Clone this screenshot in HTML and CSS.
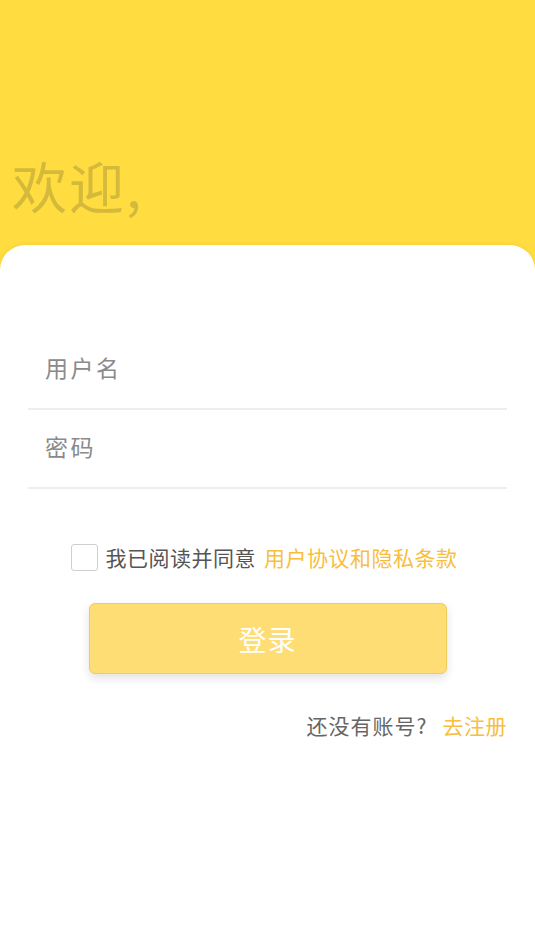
FILE: index.html
```html
<!DOCTYPE html>
<html lang="zh-CN">
<head>
    <meta charset="UTF-8">
    <meta name="viewport" content="width=device-width, initial-scale=1.0">
    <title>登录</title>
    <link rel="stylesheet" href="styles.css">
</head>
<body>
    <div class="header">
        <h1>欢迎,</h1>
    </div>

    <div class="card">
        <div class="form">
            <div class="field">
                <input type="text" placeholder="用户名">
            </div>
            <div class="field">
                <input type="password" placeholder="密码">
            </div>
        </div>

        <label class="agree">
            <span class="box"></span>
            <span>我已阅读并同意</span>
            <a href="#" class="link">用户协议和隐私条款</a>
        </label>

        <button class="login">登录</button>

        <div class="register">
            还没有账号?<a href="#" class="link">去注册</a>
        </div>
    </div>
</body>
</html>
```

FILE: styles.css
```css
body {
    font-family: "Noto Sans CJK SC", "Noto Sans", sans-serif;
    background-color: #fff;
    margin: 0;
    padding: 0;
}

.header {
    background-color: #ffdc3f;
    height: 270px;
    padding: 0 12px;
    box-sizing: border-box;
}

.header h1 {
    margin: 0;
    padding-top: 144px;
    font-size: 55px;
    font-weight: normal;
    line-height: 80px;
    letter-spacing: 2px;
    color: #d5b93a;
}

.card {
    background-color: #fff;
    margin-top: -25px;
    border-radius: 25px 25px 0 0;
    padding: 86px 28px 0;
    min-height: 600px;
    box-shadow: 0 -1px 3px rgba(180, 150, 30, 0.15);
}

.field {
    border-bottom: 2px solid #eeeeee;
    height: 77px;
    display: flex;
    align-items: center;
}

.field input {
    border: none;
    outline: none;
    width: 100%;
    padding: 0 16px 6px 17px;
    font-family: inherit;
    font-size: 23px;
    letter-spacing: 2.5px;
    color: #333;
    background: transparent;
}

.field input::placeholder {
    color: #8a8a8a;
}

.agree {
    display: flex;
    align-items: center;
    justify-content: center;
    margin-top: 53px;
    padding-right: 7px;
    font-size: 21px;
    letter-spacing: 0.5px;
    color: #555;
}

.box {
    width: 25px;
    height: 25px;
    border: 1px solid #cfcfcf;
    border-radius: 3px;
    margin-right: 8px;
}

.link {
    color: #f8be3c;
    text-decoration: none;
    margin-left: 8px;
}

.login {
    display: block;
    width: 358px;
    height: 71px;
    margin: 31px auto 0;
    background-color: #ffdd75;
    border: 1px solid #f0cc5c;
    border-radius: 6px;
    color: #fff;
    font-family: inherit;
    font-size: 28px;
    letter-spacing: 1px;
    box-shadow: 0 4px 10px rgba(0, 0, 0, 0.12);
}

.register {
    text-align: right;
    margin-top: 36px;
    font-size: 21px;
    letter-spacing: 1px;
    color: #666;
}

.register .link {
    margin-left: 15px;
    letter-spacing: 0.5px;
}
```
